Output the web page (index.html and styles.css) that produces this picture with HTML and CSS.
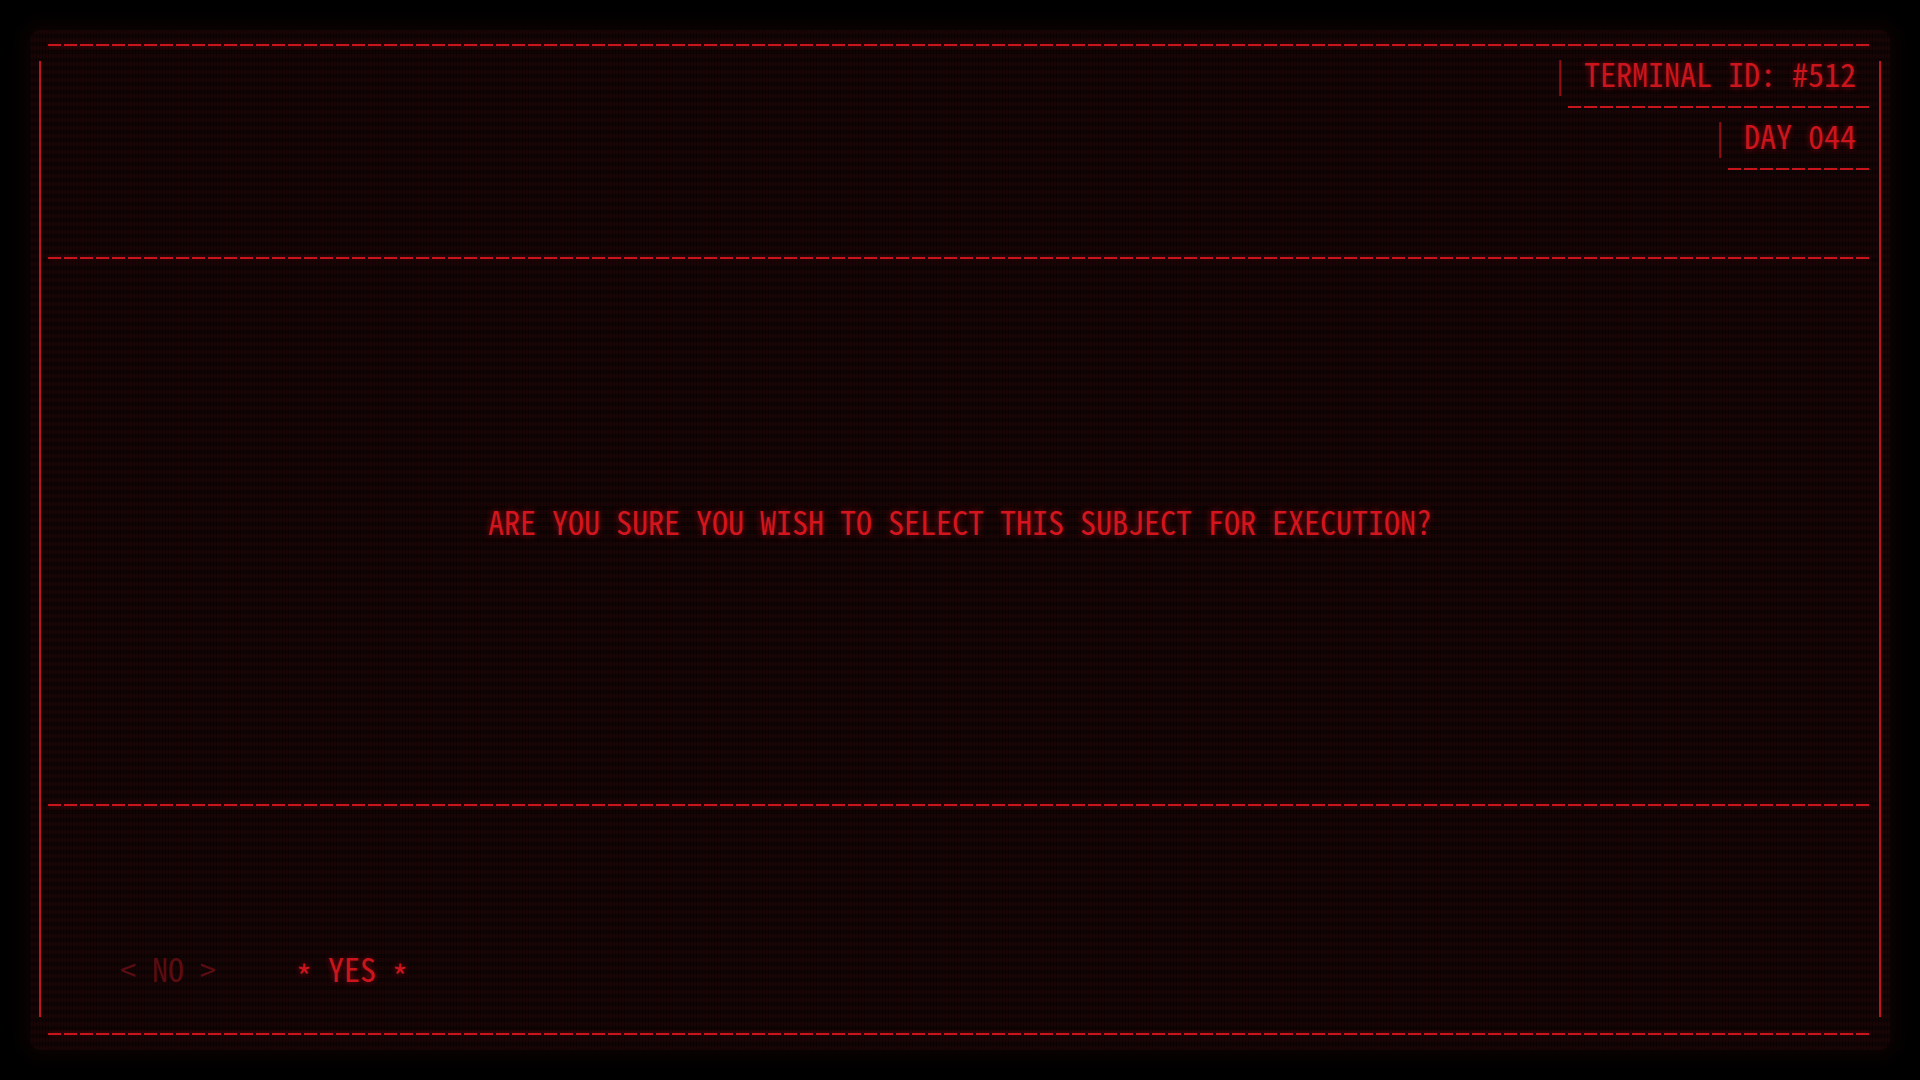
FILE: index.html
```html
<!DOCTYPE html>
<html lang="en">
<head>
<meta charset="utf-8">
<title>Terminal #512</title>
<link rel="stylesheet" href="styles.css">
</head>
<body>
<div class="crt">
  <div class="rule"></div>
  <div class="rails">
    <header class="status">
      <div class="tag">
        <span class="pipe">|</span><span class="tag-text">TERMINAL ID: #512</span>
      </div>
      <div class="tag">
        <span class="pipe">|</span><span class="tag-text">DAY 044</span>
      </div>
    </header>
    <div class="rule inner"></div>
    <main class="prompt">
      <p class="question">ARE YOU SURE YOU WISH TO SELECT THIS SUBJECT FOR EXECUTION?</p>
    </main>
    <div class="rule inner"></div>
    <footer class="choices">
      <span class="choice off">&lt; NO &gt;</span>
      <span class="choice on"><span class="star">*</span> YES <span class="star">*</span></span>
    </footer>
  </div>
  <div class="rule"></div>
</div>
</body>
</html>
```
FILE: styles.css
```css
html, body {
  margin: 0;
  padding: 0;
  background: #000;
}

body {
  width: 1920px;
  height: 1080px;
  overflow: hidden;
  padding-top: 30px;
  box-sizing: border-box;
  font-family: "Noto Sans Mono CJK JP", "DejaVu Sans Mono", monospace;
  font-size: 32px;
  line-height: 32px;
  color: #cc141c;
}

/* the glass: dark red phosphor with scanlines */
.crt {
  margin: 0 30px;
  height: 1020px;
  box-sizing: border-box;
  padding: 14px 0 15px;
  border-radius: 10px;
  background-color: #0f0304;
  background-image:
    repeating-linear-gradient(to right, rgba(0, 0, 0, 0.35) 0 1px, transparent 1px 3px),
    repeating-linear-gradient(to bottom, rgba(120, 20, 20, 0.10) 0 4px, transparent 4px 8px);
  box-shadow: 0 0 20px 8px rgba(14, 3, 4, 0.85);
}

/* dashed horizontal rules */
.rule {
  height: 2px;
  margin: 0 20px 0 18px;
  background-image: repeating-linear-gradient(to right, #c8141c 0 13px, transparent 13px 16px);
  box-shadow: 0 0 4px rgba(220, 20, 30, 0.35);
}

.rule.inner {
  margin: 0 9px 0 7px;
}

/* solid side rails */
.rails {
  margin: 15px 9px 16px;
  height: 956px;
  display: flex;
  flex-direction: column;
  border-left: 2px solid #c4141b;
  border-right: 2px solid #c4141b;
}

.status {
  height: 196px;
  display: flex;
  flex-direction: column;
  align-items: flex-end;
  padding-right: 9px;
}

.tag {
  display: flex;
  align-items: flex-start;
  margin-top: 11px;
}

.tag:first-child {
  margin-top: -4px;
}

.pipe {
  width: 16px;
  text-align: center;
  color: #8e0f15;
}

.tag-text {
  padding: 0 14px 19px 16px;
  text-shadow: 0 0 6px rgba(255, 20, 30, 0.45);
  background-image: repeating-linear-gradient(to right, #c8141c 0 13px, transparent 13px 16px);
  background-size: 100% 2px;
  background-position: left bottom;
  background-repeat: no-repeat;
  white-space: pre;
}

.prompt {
  height: 545px;
  display: flex;
  align-items: center;
  justify-content: center;
  padding-bottom: 21px;
  box-sizing: border-box;
}

.question {
  margin: 0;
  color: #d4151d;
  text-shadow: 0 0 7px rgba(255, 20, 30, 0.5);
  white-space: pre;
}

.choices {
  height: 211px;
  box-sizing: border-box;
  display: flex;
  align-items: flex-end;
  gap: 80px;
  padding: 0 0 33px 79px;
}

.choice {
  white-space: pre;
}

.choice.off {
  color: #5a0d11;
}

.choice.on {
  color: #cc141c;
  text-shadow: 0 0 6px rgba(255, 20, 30, 0.45);
}

/* asterisks sit on the middle of the caps without growing the line */
.star {
  line-height: 0;
  vertical-align: -0.22em;
}
```
